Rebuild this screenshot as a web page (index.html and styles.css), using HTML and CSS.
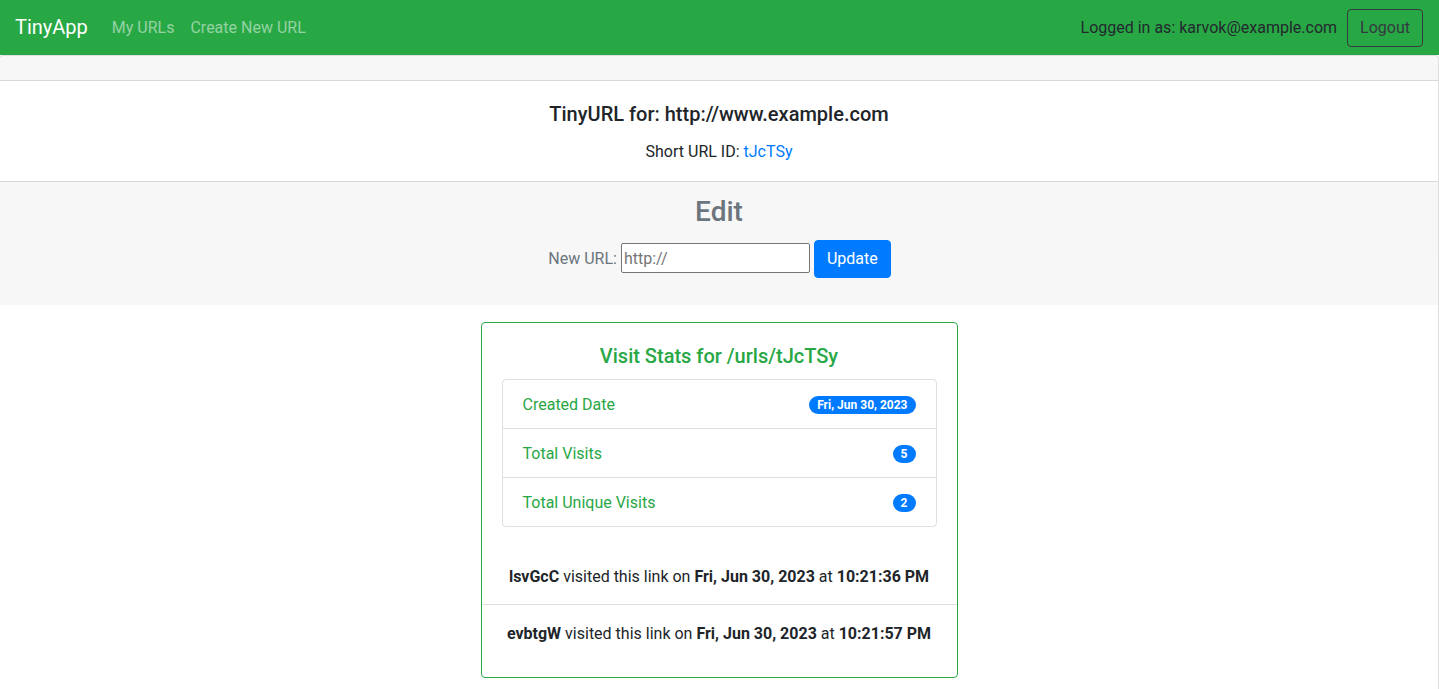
FILE: index.html
```html
<!DOCTYPE html>
<html lang="en">
<head>
<meta charset="utf-8">
<title>TinyApp</title>
<link rel="stylesheet" href="styles.css">
</head>
<body>
<nav class="navbar">
  <div class="nav-left">
    <a class="brand" href="#">TinyApp</a>
    <a class="nav-link" href="#">My URLs</a>
    <a class="nav-link" href="#">Create New URL</a>
  </div>
  <div class="nav-right">
    <span class="logged">Logged in as: karvok@example.com</span>
    <button class="btn btn-outline-dark">Logout</button>
  </div>
</nav>
<main class="card main-card">
  <div class="card-header"></div>
  <div class="card-body center">
    <h5 class="card-title url-title">TinyURL for: http://www.example.com</h5>
    <p class="card-text">Short URL ID: <a class="link" href="#">tJcTSy</a></p>
  </div>
  <div class="card-footer center">
    <h3 class="edit-title">Edit</h3>
    <form class="edit-form">
      <label class="muted" for="newurl">New URL:</label>
      <input id="newurl" class="url-input" type="text" placeholder="http://">
      <button type="button" class="btn btn-primary">Update</button>
    </form>
  </div>
  <div class="stats-wrap">
    <section class="card stats-card">
      <div class="stats-body">
        <h5 class="card-title green center">Visit Stats for /urls/tJcTSy</h5>
        <ul class="list-group">
          <li class="list-item"><span>Created Date</span><span class="badge">Fri, Jun 30, 2023</span></li>
          <li class="list-item"><span>Total Visits</span><span class="badge">5</span></li>
          <li class="list-item"><span>Total Unique Visits</span><span class="badge">2</span></li>
        </ul>
      </div>
      <div class="visits">
        <div class="visit"><b>lsvGcC</b> visited this link on <b>Fri, Jun 30, 2023</b> at <b>10:21:36 PM</b></div>
        <div class="visit"><b>evbtgW</b> visited this link on <b>Fri, Jun 30, 2023</b> at <b>10:21:57 PM</b></div>
      </div>
    </section>
  </div>
</main>
</body>
</html>
```
FILE: styles.css
```css
* { box-sizing: border-box; }
html, body { margin: 0; padding: 0; }
body {
  font-family: Roboto, "Liberation Sans", sans-serif;
  font-size: 16px;
  line-height: 1.5;
  color: #212529;
  background: #fff;
  overflow: hidden;
}
a { text-decoration: none; }

.navbar {
  display: flex;
  justify-content: space-between;
  align-items: center;
  height: 55px;
  padding: 0 16px 0 15px;
  background: #28a745;
}
.nav-left, .nav-right { display: flex; align-items: center; }
.brand {
  color: #fff;
  font-size: 20px;
  line-height: 30px;
  margin-right: 16px;
  padding-bottom: 1px;
}
.nav-link {
  color: rgba(255,255,255,.5);
  padding: 8px;
}
.logged { color: #23292e; margin-right: 10px; }
.btn {
  font-family: inherit;
  font-size: 16px;
  line-height: 24px;
  padding: 6px 12px;
  border-radius: 4px;
  border: 1px solid transparent;
  cursor: pointer;
}
.btn-outline-dark {
  background: transparent;
  color: #343a40;
  border-color: #343a40;
}
.btn-primary {
  background: #007bff;
  border-color: #007bff;
  color: #fff;
}

.card {
  background: #fff;
  border: 1px solid rgba(0,0,0,.125);
  border-radius: 4px;
}
.main-card {
  margin-left: -1px;
  border-bottom: none;
  border-bottom-left-radius: 0;
  border-bottom-right-radius: 0;
}
.card-header {
  height: 25px;
  background: rgba(0,0,0,.03);
  border-bottom: 1px solid rgba(0,0,0,.125);
  border-radius: 3px 3px 0 0;
}
.center { text-align: center; }
.card-body { padding: 21px 20px 17px; }
.card-title {
  margin: 0 0 12px;
  font-size: 20px;
  font-weight: 500;
  line-height: 24px;
}
.url-title { margin-bottom: 14px; }
.card-text { margin: 0; }
.link { color: #007bff; }

.card-footer {
  background: rgba(0,0,0,.03);
  border-top: 1px solid rgba(0,0,0,.125);
  padding: 13px 20px 11px;
}
.edit-title {
  margin: 0 0 11px;
  font-size: 28px;
  font-weight: 500;
  line-height: 34px;
  color: #6c757d;
}
.edit-form {
  display: flex;
  justify-content: center;
  align-items: center;
  gap: 4px;
  margin-bottom: 16px;
  padding-left: 1px;
}
.muted { color: #6c757d; }
.url-input {
  width: 189px;
  height: 30px;
  margin-top: -2px;
  font-family: inherit;
  font-size: 16px;
  padding: 1px 2px;
  border: 1px solid #767676;
  border-radius: 2px;
  background: #fff;
  color: #212529;
}
.url-input::placeholder { color: #757575; }

.stats-wrap {
  padding: 17px 20px 20px;
  display: flex;
  justify-content: center;
}
.stats-card {
  width: 477px;
  border: 1px solid #28a745;
}
.stats-body { padding: 21px 20px 0; }
.green { color: #28a745; }
.stats-body .card-title { margin-bottom: 11px; }
.list-group {
  list-style: none;
  margin: 0;
  padding: 0;
  border: 1px solid rgba(0,0,0,.125);
  border-radius: 4px;
}
.list-item {
  display: flex;
  justify-content: space-between;
  align-items: center;
  padding: 13px 20px 11px;
  color: #28a745;
}
.list-item + .list-item { border-top: 1px solid rgba(0,0,0,.125); }
.badge {
  display: inline-block;
  background: #007bff;
  color: #fff;
  font-size: 12px;
  font-weight: 700;
  line-height: 1;
  padding: 3px 8px;
  border-radius: 10rem;
  margin-top: -1px;
}
.visits { padding: 38px 0 31px; }
.visit { text-align: center; }
.visit + .visit {
  margin-top: 15px;
  padding-top: 17px;
  border-top: 1px solid rgba(0,0,0,.125);
}
.visit b { font-weight: 700; }
```
